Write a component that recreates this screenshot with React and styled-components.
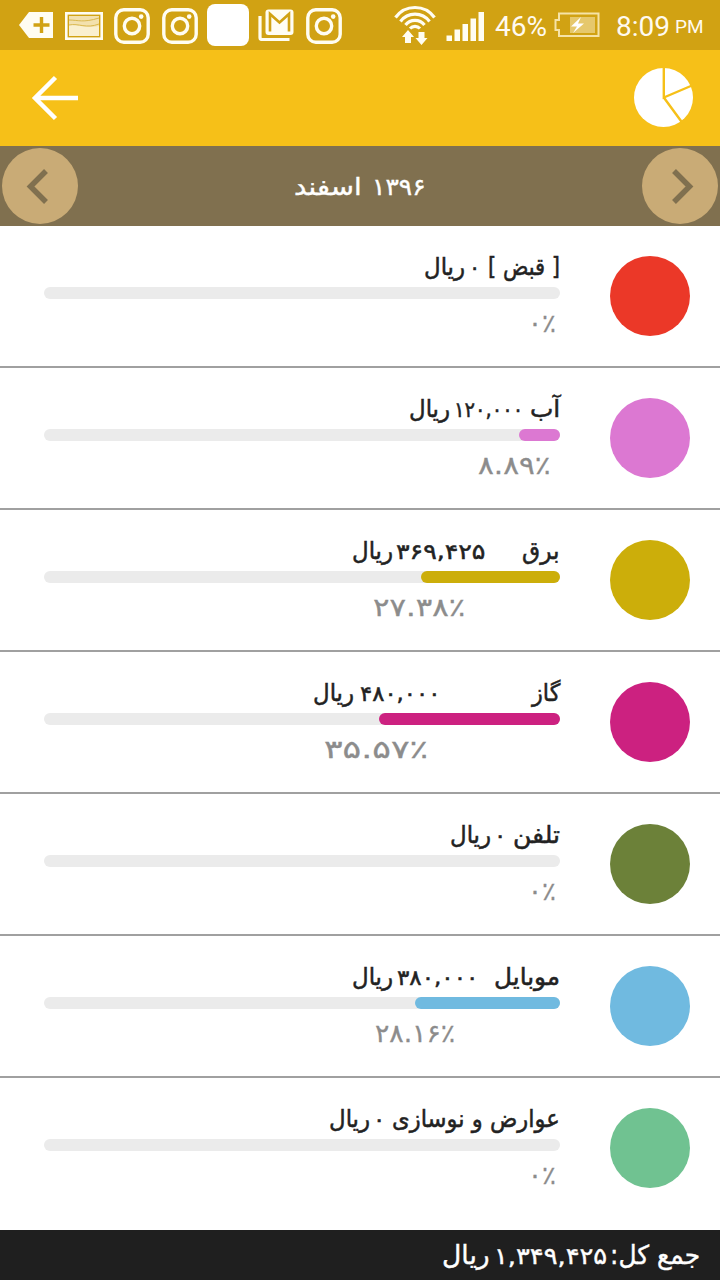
import React, { useLayoutEffect, useRef, useState } from "react";
import styled, { createGlobalStyle } from "styled-components";

const GlobalStyle = createGlobalStyle`
  * {
    box-sizing: border-box;
  }
  body {
    margin: 0;
    background-color: #fff;
    font-family: "DejaVu Sans", sans-serif;
  }
`;

const Screen = styled.div`
  display: flex;
  flex-direction: column;
  width: 720px;
  height: 1280px;
  overflow: hidden;
  background-color: #fff;
`;

const StatusBar = styled.div`
  display: flex;
  align-items: flex-start;
  height: 50px;
  padding-left: 18px;
  background-color: #d1a213;
  color: #fffaf0;
  font-family: Roboto, sans-serif;
  svg {
    display: block;
    flex: none;
  }
`;

const StatusIcon = styled.div`
  flex: none;
  width: ${(p) => p.$w}px;
  margin-left: ${(p) => p.$gap || 0}px;
  padding-top: ${(p) => p.$top}px;
`;

const BlankIcon = styled.div`
  width: 42px;
  height: 42px;
  border-radius: 8px;
  background-color: #fff;
`;

const StatusText = styled.div`
  flex: none;
  width: ${(p) => p.$w}px;
  margin-left: ${(p) => p.$gap}px;
  font-size: ${(p) => p.$size || 28}px;
  line-height: 53px;
  white-space: nowrap;
`;

const Toolbar = styled.div`
  display: flex;
  justify-content: space-between;
  align-items: center;
  height: 96px;
  padding: 0 26px 0 31px;
  background-color: #f6c018;
`;

const MonthBar = styled.div`
  display: flex;
  justify-content: space-between;
  align-items: center;
  height: 80px;
  padding: 0 2px;
  background-color: #80704f;
`;

const MonthLabel = styled.div`
  display: flex;
  align-items: baseline;
  gap: 10px;
  padding-top: 1px;
  color: #fff;
  font-size: 24px;
  line-height: 30px;
  -webkit-text-stroke: 0.4px;
`;

const RoundButton = styled.button`
  display: flex;
  align-items: center;
  justify-content: center;
  width: 76px;
  height: 76px;
  padding: 0;
  border: 0;
  border-radius: 50%;
  background-color: #c9ab76;
`;

const List = styled.div`
  flex: 1;
`;

const Row = styled.div`
  display: flex;
  direction: rtl;
  height: 142px;
  padding: 30px 30px 0 44px;
  border-bottom: 2px solid #a0a0a0;
  &:last-child {
    border-bottom: 0;
  }
`;

const Dot = styled.div`
  flex: none;
  width: 80px;
  height: 80px;
  margin-left: 50px;
  border-radius: 50%;
  background-color: ${(p) => p.$color};
`;

const Details = styled.div`
  flex: 1;
`;

const TitleLine = styled.div`
  display: flex;
  align-items: baseline;
  height: 31px;
  color: #222;
  font-size: 24px;
  line-height: 22px;
  -webkit-text-stroke: 0.5px;
`;

const Track = styled.div`
  height: 12px;
  border-radius: 6px;
  background-color: #ebebeb;
`;

const Fill = styled.div`
  height: 12px;
  border-radius: 6px;
  background-color: ${(p) => p.$color};
`;

const Percent = styled.div`
  display: flex;
  padding: 9px ${(p) => p.$indent}px 0 0;
  color: #8c8c8c;
  font-size: 25px;
  line-height: 32px;
  -webkit-text-stroke: 0.3px;
`;

const Footer = styled.div`
  display: flex;
  direction: rtl;
  align-items: baseline;
  height: 50px;
  padding: 7px 20px 0 0;
  background-color: #1f1f1f;
  color: #fff;
  font-size: 26px;
  line-height: 36px;
  -webkit-text-stroke: 0.4px;
`;

const FitBox = styled.span`
  flex: none;
  display: inline-block;
  direction: ltr;
  width: ${(p) => p.$w}px;
  margin-right: ${(p) => p.$gap || 0}px;
  font-size: ${(p) => (p.$size ? p.$size + "px" : "inherit")};
  text-align: left;
  white-space: nowrap;
`;

const FitInner = styled.span`
  display: inline-block;
  direction: ${(p) => (p.$ltr ? "ltr" : "rtl")};
  unicode-bidi: ${(p) => (p.$ltr ? "bidi-override" : "normal")};
  transform-origin: left center;
`;

// squeezes or stretches a word to the width of its box
function Fit({ w, gap, size, ltr, children }) {
  const ref = useRef(null);
  const [scale, setScale] = useState(1);
  useLayoutEffect(() => {
    setScale(w / ref.current.offsetWidth);
  }, [w, size, children]);
  return (
    <FitBox $w={w} $gap={gap} $size={size}>
      <FitInner ref={ref} $ltr={ltr} style={{ transform: `scaleX(${scale})` }}>
        {children}
      </FitInner>
    </FitBox>
  );
}

const rows = [
  { name: "[ قبض ]", nameW: 72, color: "#eb3828", amount: "۰", gap: 8, amountW: 11, unitGap: 4, percent: "۰٪", pw: 28, indent: 4, fill: 0 },
  { name: "آب", nameW: 30, color: "#dc78d2", amount: "۱۲۰,۰۰۰", gap: 7, amountW: 69, unitGap: 4, percent: "۸.۸۹٪", pw: 73, indent: 9, fill: 41 },
  { name: "برق", nameW: 38, color: "#ccae0a", amount: "۳۶۹,۴۲۵", gap: 37, amountW: 89, unitGap: 3, percent: "۲۷.۳۸٪", pw: 92, indent: 95, fill: 139 },
  { name: "گاز", nameW: 28, color: "#cc2180", amount: "۴۸۰,۰۰۰", gap: 92, amountW: 80, unitGap: 6, percent: "۳۵.۵۷٪", pw: 104, indent: 132, fill: 181 },
  { name: "تلفن", nameW: 47, color: "#6c8139", amount: "۰", gap: 7, amountW: 12, unitGap: 3, percent: "۰٪", pw: 28, indent: 4, fill: 0 },
  { name: "موبایل", nameW: 66, color: "#70bae0", amount: "۳۸۰,۰۰۰", gap: 16, amountW: 81, unitGap: 4, percent: "۲۸.۱۶٪", pw: 80, indent: 105, fill: 145 },
  { name: "عوارض و نوسازی", nameW: 168, color: "#70c291", amount: "۰", gap: 7, amountW: 12, unitGap: 3, percent: "۰٪", pw: 28, indent: 4, fill: 0 },
];

function InstagramIcon() {
  return (
    <svg width="36" height="36" viewBox="0 0 36 36" fill="none" stroke="#fffdf2">
      <rect x="1.8" y="1.8" width="32.4" height="32.4" rx="8" strokeWidth="3.4" />
      <circle cx="18" cy="18" r="7.7" strokeWidth="3.4" />
      <circle cx="27.2" cy="8.6" r="2.3" fill="#fffdf2" stroke="none" />
    </svg>
  );
}

function Status() {
  return (
    <StatusBar>
      <StatusIcon $w={35} $top={12}>
        <svg width="35" height="26" viewBox="0 0 35 26">
          <path d="M1 13 11 0H35V26H11Z" fill="#fffdf2" />
          <path d="M23.5 5v16M15.5 13h16" stroke="#d1a213" strokeWidth="3.4" />
        </svg>
      </StatusIcon>
      <StatusIcon $w={38} $gap={12} $top={12}>
        <svg width="38" height="28" viewBox="0 0 38 28">
          <rect x="1.3" y="1.3" width="35.4" height="25.4" fill="none" stroke="#fffdf2" strokeWidth="2.6" />
          <rect x="4" y="4" width="30" height="20" fill="#f3e1ad" />
          <path d="M4 13c9-1 14 4 30 1v10H4Z" fill="#faf0cf" />
          <path d="M4 8c9 0 14 3 30-2M4 13c10-2 17 4 30-1" fill="none" stroke="#dab84e" strokeWidth="1" />
        </svg>
      </StatusIcon>
      <StatusIcon $w={36} $gap={11} $top={8}>
        <InstagramIcon />
      </StatusIcon>
      <StatusIcon $w={36} $gap={12} $top={8}>
        <InstagramIcon />
      </StatusIcon>
      <StatusIcon $w={42} $gap={9} $top={4}>
        <BlankIcon />
      </StatusIcon>
      <StatusIcon $w={36} $gap={9} $top={9}>
        <svg width="36" height="32" viewBox="0 0 36 32" fill="none">
          <path d="M2 7V28.500a2 2 0 0 0 2 2H31.500" stroke="#fffdf2" strokeWidth="3.2" />
          <rect x="7.500" y="0.500" width="28" height="25.500" rx="3" fill="#fffdf2" />
          <path d="M12 22.500V5L21.500 13.500 31 5V22.500" stroke="#d1a213" strokeWidth="2.6" />
        </svg>
      </StatusIcon>
      <StatusIcon $w={36} $gap={12} $top={8}>
        <InstagramIcon />
      </StatusIcon>
      <StatusIcon $w={42} $gap={52} $top={4}>
        <svg width="42" height="42" viewBox="0 0 42 42" fill="none" stroke="#fffdf2" strokeWidth="3.2">
          <path d="M1.500 13.500A24 24 0 0 1 40.500 13.500M6.500 17.500A18 18 0 0 1 35.500 17.500M11.500 21A12 12 0 0 1 30.500 21M16 24.500A7 7 0 0 1 26 24.500" />
          <path d="M14 26 20 33H17V39H11V33H8ZM27.500 41 33.500 34H30.500V28H24.500V34H21.500Z" fill="#fffdf2" stroke="none" />
        </svg>
      </StatusIcon>
      <StatusIcon $w={38} $gap={10} $top={12}>
        <svg width="38" height="29" viewBox="0 0 38 29" fill="#fffdf2">
          <path d="M.5 23.500h5.500V29H.5zM8.500 17.500H14V29H8.500zM16.500 12H22v17h-5.500zM24.500 6.500H30V29h-5.500zM32.500 0H38v29h-5.500z" />
        </svg>
      </StatusIcon>
      <StatusText $w={52} $gap={11}>46%</StatusText>
      <StatusIcon $w={46} $gap={7} $top={12}>
        <svg width="46" height="26" viewBox="0 0 46 26">
          <path d="M5 1.500H44.500V24H5V18H1.500V8H5Z" fill="none" stroke="#f6e3a6" strokeWidth="2" />
          <rect x="16" y="5" width="25" height="16" fill="#e6c86c" />
          <path d="M27 5 17 14.500h6L19 21 30 11.500h-6Z" fill="#fff" />
        </svg>
      </StatusIcon>
      <StatusText $w={54} $gap={16}>8:09</StatusText>
      <StatusText $w={30} $gap={5} $size={19}>PM</StatusText>
    </StatusBar>
  );
}

function Category({ row }) {
  return (
    <Row>
      <Dot $color={row.color} />
      <Details>
        <TitleLine>
          <Fit w={row.nameW}>{row.name}</Fit>
          <Fit w={row.amountW} gap={row.gap} size={21} ltr>{row.amount}</Fit>
          <Fit w={41} gap={row.unitGap}>ریال</Fit>
        </TitleLine>
        <Track>{row.fill > 0 && <Fill $color={row.color} style={{ width: row.fill }} />}</Track>
        <Percent $indent={row.indent}>
          <Fit w={row.pw} ltr>{row.percent}</Fit>
        </Percent>
      </Details>
    </Row>
  );
}

function App() {
  return (
    <>
      <GlobalStyle />
      <Screen>
        <Status />
        <Toolbar>
          <svg width="48" height="46" viewBox="0 0 48 46" fill="none" stroke="#fff" strokeWidth="4.5">
            <path d="M24.500 2.500 4 23 24.500 43.500M4 23H47" />
          </svg>
          <svg width="60" height="60" viewBox="0 0 60 60">
            <circle cx="29.5" cy="29.5" r="29.5" fill="#fff" />
            <path d="M29.800 0V29.500L58 17.500M29.800 29.500 48.500 55" fill="none" stroke="#f6c018" strokeWidth="2.4" />
          </svg>
        </Toolbar>
        <MonthBar>
          <RoundButton>
            <svg width="76" height="76" viewBox="0 0 76 76" fill="none" stroke="#80704f" strokeWidth="5.5">
              <path d="M44 23 28.500 38.500 44 54" />
            </svg>
          </RoundButton>
          <MonthLabel>
            <Fit w={68}>اسفند</Fit>
            <Fit w={54} ltr>۱۳۹۶</Fit>
          </MonthLabel>
          <RoundButton>
            <svg width="76" height="76" viewBox="0 0 76 76" fill="none" stroke="#80704f" strokeWidth="5.5">
              <path d="M32 23 47.500 38.500 32 54" />
            </svg>
          </RoundButton>
        </MonthBar>
        <List>
          {rows.map((row) => (
            <Category key={row.name} row={row} />
          ))}
        </List>
        <Footer>
          <Fit w={90}>جمع کل:</Fit>
          <Fit w={113} gap={3} size={23} ltr>۱,۳۴۹,۴۲۵</Fit>
          <Fit w={48} gap={4}>ریال</Fit>
        </Footer>
      </Screen>
    </>
  );
}
export default App;
